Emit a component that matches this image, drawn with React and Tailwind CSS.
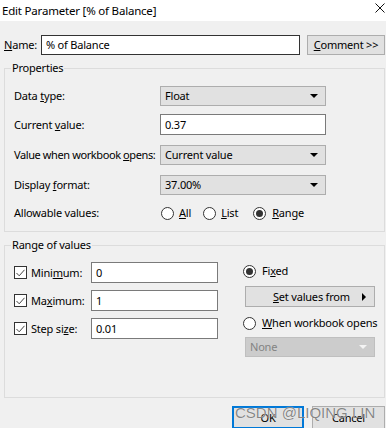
function Radio({ on }) {
  return (
    <span className="flex h-[13px] w-[13px] shrink-0 items-center justify-center rounded-full border border-[#333333] bg-white">
      {on && <span className="h-[7px] w-[7px] rounded-full bg-[#333333]" />}
    </span>
  );
}

function Box() {
  return (
    <span className="flex h-[13px] w-[13px] shrink-0 items-center justify-center border border-[#333333] bg-white">
      <svg width="9" height="8" viewBox="0 0 9 8">
        <path d="M0.5 4L3.2 6.8L8.5 0.8" fill="none" stroke="#444444" strokeWidth="1" />
      </svg>
    </span>
  );
}

function Drop({ children, width = "w-[166px]", disabled }) {
  return (
    <div
      className={`flex h-[20px] ${width} items-center justify-between border pl-[4px] pr-[7px] ${
        disabled ? "border-[#bfbfbf] bg-[#cccccc] text-[#838383]" : "border-[#adadad] bg-[#e1e1e1]"
      }`}
    >
      <span>{children}</span>
      <svg width="8" height="4" viewBox="0 0 8 4">
        <path d="M0 0H8L4 4Z" fill={disabled ? "#f4f4f4" : "#000000"} />
      </svg>
    </div>
  );
}

function Field({ children, width = "w-[166px]" }) {
  return (
    <div className={`flex h-[21px] ${width} items-center border border-[#7a7a7a] bg-white px-[4px]`}>
      {children}
    </div>
  );
}

function Group({ label, className, children }) {
  return (
    <div className={`relative border border-[#dcdcdc] ${className}`}>
      <span className="absolute -top-[9px] left-[6px] bg-[#f0f0f0] px-[1px] leading-[16px]">{label}</span>
      {children}
    </div>
  );
}

export default function App() {
  return (
    <div className="relative h-[428px] w-[386px] overflow-hidden whitespace-nowrap bg-[#f0f0f0] font-['Noto_Sans',sans-serif] text-[11px] leading-[16px] tracking-[-0.2px] text-black">
      <div className="flex h-[21px] items-center justify-between bg-white pl-[2px] pr-[1px] text-[11.5px]">
        <span>Edit Parameter [% of Balance]</span>
        <svg width="10" height="10" viewBox="0 0 10 10" className="mb-[5px]">
          <path d="M0.5 0.5L9.5 9.5M9.5 0.5L0.5 9.5" stroke="#111111" strokeWidth="1" />
        </svg>
      </div>

      <div className="pl-[4px] pr-[1px]">
        <div className="mt-[14px] flex h-[20px] items-center">
          <span className="w-[37px]">
            <u>N</u>ame:
          </span>
          <div className="flex h-[20px] w-[259px] items-center border border-[#333333] bg-white px-[4px]">
            % of Balance
          </div>
          <div className="ml-[7px] flex h-[20px] w-[78px] items-center justify-center border border-[#adadad] bg-[#e1e1e1]">
            <span>
              <u>C</u>omment &gt;&gt;
            </span>
          </div>
        </div>

        <Group label="Properties" className="mt-[13px] h-[164px] pl-[9px] pt-[17px]">
          <div className="flex h-[20px] items-center">
            <span className="w-[146px]">
              Data <u>t</u>ype:
            </span>
            <Drop>Float</Drop>
          </div>
          <div className="mt-[8px] flex h-[21px] items-center">
            <span className="w-[146px]">
              Current <u>v</u>alue:
            </span>
            <Field>0.37</Field>
          </div>
          <div className="mt-[10px] flex h-[20px] items-center">
            <span className="w-[146px] tracking-[-0.4px]">
              Value when workbook <u>o</u>pens:
            </span>
            <Drop>Current value</Drop>
          </div>
          <div className="mt-[10px] flex h-[20px] items-center">
            <span className="w-[146px]">
              Display <u>f</u>ormat:
            </span>
            <Drop>37.00%</Drop>
          </div>
          <div className="mt-[10px] flex h-[16px] items-center">
            <span className="w-[147px]">Allowable values:</span>
            <Radio />
            <span className="ml-[5px] mr-[12px]">
              <u>A</u>ll
            </span>
            <Radio />
            <span className="ml-[5px] mr-[15px]">
              <u>L</u>ist
            </span>
            <Radio on />
            <span className="ml-[6px]">
              <u>R</u>ange
            </span>
          </div>
        </Group>

        <Group label="Range of values" className="mt-[13px] flex h-[153px] pl-[9px]">
          <div className="flex flex-col gap-[7px] pt-[16px]">
            {[
              [<>Mini<u>m</u>um:</>, "0"],
              [<>Ma<u>x</u>imum:</>, "1"],
              [<>Step si<u>z</u>e:</>, "0.01"],
            ].map(([label, value], i) => (
              <div key={i} className="flex h-[21px] items-center">
                <Box />
                <span className="ml-[4px] w-[60px]">{label}</span>
                <Field width="w-[127px]">{value}</Field>
              </div>
            ))}
          </div>
          <div className="ml-[25px] flex flex-col pt-[17px]">
            <div className="flex h-[16px] items-center">
              <Radio on />
              <span className="ml-[6px]">
                Fi<u>x</u>ed
              </span>
            </div>
            <div className="ml-[2px] mt-[7px] flex h-[21px] w-[130px] items-center justify-between border border-[#adadad] bg-[#e1e1e1] pl-[27px] pr-[8px]">
              <span>
                <u>S</u>et values from
              </span>
              <svg width="4" height="8" viewBox="0 0 4 8">
                <path d="M0 0V8L4 4Z" fill="#000000" />
              </svg>
            </div>
            <div className="mt-[8px] flex h-[16px] items-center">
              <Radio />
              <span className="ml-[6px]">
                <u>W</u>hen workbook opens
              </span>
            </div>
            <div className="ml-[2px] mt-[6px]">
              <Drop width="w-[130px]" disabled>
                None
              </Drop>
            </div>
          </div>
        </Group>

        <div className="mt-[8px] flex justify-end gap-[8px]">
          <div className="flex h-[23px] w-[72px] items-center justify-center border-2 border-[#0078d7] bg-[#e1e1e1]">
            OK
          </div>
          <div className="flex h-[23px] w-[73px] items-center justify-center border border-[#adadad] bg-[#e1e1e1]">
            Cancel
          </div>
        </div>
      </div>

      <span className="absolute left-[235px] top-[404px] font-['Liberation_Sans',sans-serif] text-[15px] leading-[18px] tracking-normal text-[#5f5f5f]/75 [text-shadow:0_0_1px_#ffffff]">
        CSDN @LIQING LIN
      </span>
    </div>
  );
}
